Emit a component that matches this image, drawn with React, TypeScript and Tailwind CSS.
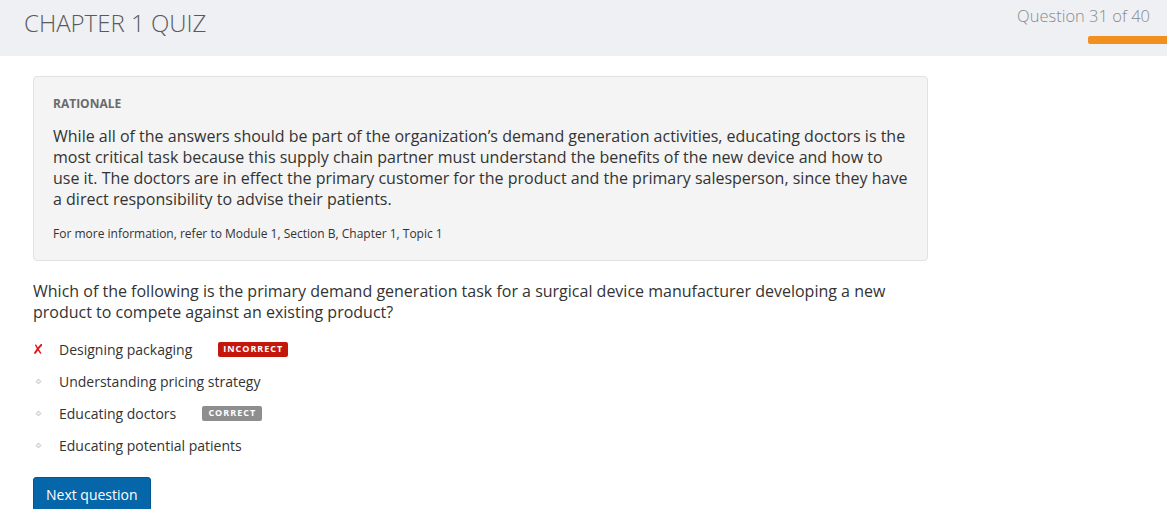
import React from "react";

const Bullet = () => (
  <svg width="7" height="7" viewBox="0 0 7 7" className="block">
    <path d="M3.5 0.5 L6.5 3.5 L3.5 6.5 L0.5 3.5 Z" fill="#cfcfcf" />
    <path d="M3.5 2 L5 3.5 L3.5 5 L2 3.5 Z" fill="#f7f7f7" />
  </svg>
);

const Cross = () => (
  <svg width="8" height="10" viewBox="0 0 8 10" className="block">
    <path d="M1 9 C3 6 5 3 7.5 0.8" stroke="#e3161b" strokeWidth="1.9" fill="none" strokeLinecap="round" />
    <path d="M1.8 1.2 C3 4 4.8 6.5 6.5 9" stroke="#e3161b" strokeWidth="1.5" fill="none" strokeLinecap="round" />
  </svg>
);

export default function App() {
  const options = [
    { text: "Designing packaging", mark: "x", badge: "INCORRECT" },
    { text: "Understanding pricing strategy" },
    { text: "Educating doctors", badge: "CORRECT" },
    { text: "Educating potential patients" },
  ];
  return (
    <div className="w-[1167px] h-[509px] overflow-hidden bg-white text-[#333]" style={{ fontFamily: '"Open Sans", sans-serif' }}>
      <header className="h-[56px] bg-[#eff0f4] flex justify-between">
        <h1 className="pl-[24px] pt-[5px] text-[24px] font-light text-[#5a5a5a]">CHAPTER 1 QUIZ</h1>
        <div className="flex flex-col items-end pt-[4px]">
          <div className="pr-[17px] text-[16.5px] font-light text-[#8a8a8a]">Question 31 of 40</div>
          <div className="mt-[7px] w-[79px] h-[8px] bg-[#f18f1f] rounded-l-[2px]" />
        </div>
      </header>
      <main className="pl-[33px] pt-[20px] w-[928px]">
        <section className="bg-[#f4f4f4] border border-[#e2e2e2] rounded-[4px] pl-[19px] pr-[19px] pt-[19px] pb-[18px]">
          <div className="text-[12px] leading-[16px] font-bold text-[#6a6a6a]">RATIONALE</div>
          <p className="mt-[14px] text-[16px] leading-[21px] text-[#333]">
            While all of the answers should be part of the organization’s demand generation activities, educating doctors is the most critical task because this supply chain partner must understand the benefits of the new device and how to use it. The doctors are in effect the primary customer for the product and the primary salesperson, since they have a direct responsibility to advise their patients.
          </p>
          <div className="mt-[16px] text-[12px] leading-[16px] text-[#333]">For more information, refer to Module 1, Section B, Chapter 1, Topic 1</div>
        </section>
        <p className="mt-[20px] text-[16px] leading-[21px] text-[#333] pr-[20px]">
          Which of the following is the primary demand generation task for a surgical device manufacturer developing a new product to compete against an existing product?
        </p>
        <ul className="mt-[10px] flex flex-col">
          {options.map((o) => (
            <li key={o.text} className="h-[32px] flex items-center">
              <span className="w-[26px] flex items-center pl-[1px]">
                {o.mark === "x" ? <Cross /> : <span className="pl-[1px]"><Bullet /></span>}
              </span>
              <span className="text-[14px] text-[#333]">{o.text}</span>
              {o.badge === "INCORRECT" && (
                <span className="ml-[26px] h-[15px] w-[70px] justify-center flex items-center rounded-[2px] bg-[#c4170c] text-white text-[9px] font-bold tracking-[1px]">INCORRECT</span>
              )}
              {o.badge === "CORRECT" && (
                <span className="ml-[26px] h-[15px] w-[60px] justify-center flex items-center rounded-[2px] bg-[#8e8e8e] text-white text-[9px] font-bold tracking-[1px]">CORRECT</span>
              )}
            </li>
          ))}
        </ul>
        <button className="mt-[16px] w-[118px] h-[36px] bg-[#0566a9] text-white text-[14px] rounded-[3px] border border-[#04578f] text-left pl-[12px] pb-[2px]">Next question</button>
      </main>
    </div>
  );
}
